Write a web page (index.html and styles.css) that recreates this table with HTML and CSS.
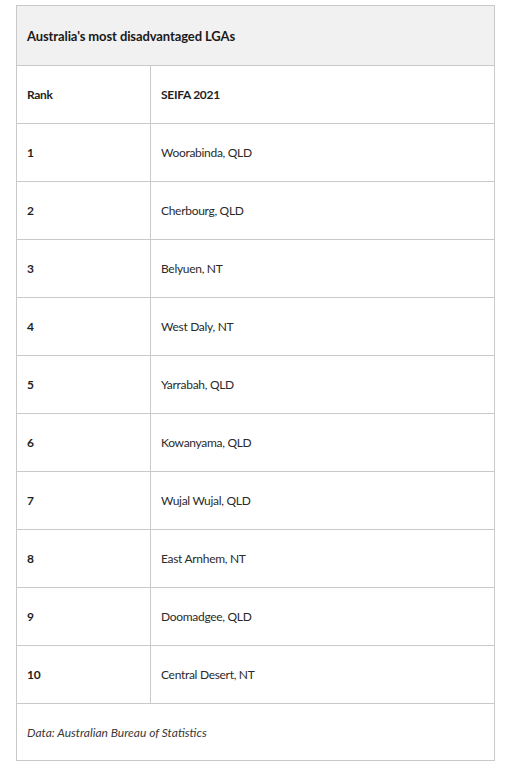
FILE: index.html
```html
<!DOCTYPE html>
<html lang="en">
<head>
<meta charset="utf-8">
<title>Australia's most disadvantaged LGAs</title>
<link rel="stylesheet" href="styles.css">
</head>
<body>
<table class="lga-table">
  <caption class="lga-caption">Australia's most disadvantaged LGAs</caption>
  <thead>
    <tr><th class="col-rank">Rank</th><th>SEIFA 2021</th></tr>
  </thead>
  <tbody>
    <tr><td class="col-rank">1</td><td>Woorabinda, QLD</td></tr>
    <tr><td class="col-rank">2</td><td>Cherbourg, QLD</td></tr>
    <tr><td class="col-rank">3</td><td>Belyuen, NT</td></tr>
    <tr><td class="col-rank">4</td><td>West Daly, NT</td></tr>
    <tr><td class="col-rank">5</td><td>Yarrabah, QLD</td></tr>
    <tr><td class="col-rank">6</td><td>Kowanyama, QLD</td></tr>
    <tr><td class="col-rank">7</td><td>Wujal Wujal, QLD</td></tr>
    <tr><td class="col-rank">8</td><td>East Arnhem, NT</td></tr>
    <tr><td class="col-rank">9</td><td>Doomadgee, QLD</td></tr>
    <tr><td class="col-rank">10</td><td>Central Desert, NT</td></tr>
  </tbody>
  <tfoot>
    <tr><td colspan="2" class="lga-source">Data: Australian Bureau of Statistics</td></tr>
  </tfoot>
</table>
</body>
</html>
```
FILE: styles.css
```css
html, body {
  margin: 0;
  padding: 0;
  background: #ffffff;
}
body {
  padding: 5px 16px 0 16px;
  font-family: Lato, "Liberation Sans", sans-serif;
  color: #1f1f1f;
}
.lga-table {
  width: 479px;
  border-collapse: collapse;
  border: 1px solid #c9c9c9;
  font-size: 12px;
}
.lga-caption {
  caption-side: top;
  text-align: left;
  background: #f1f1f1;
  border: 1px solid #c9c9c9;
  border-bottom: none;
  height: 60px;
  box-sizing: border-box;
  padding: 0 10px;
  line-height: 60px;
  font-size: 13px;
  font-weight: 700;
  letter-spacing: -0.1px;
  color: #1a1a1a;
}
.lga-table th,
.lga-table td {
  border: 1px solid #c9c9c9;
  height: 58px;
  box-sizing: border-box;
  padding: 0 10px;
  text-align: left;
  vertical-align: middle;
  font-weight: 400;
  letter-spacing: -0.3px;
  color: #2b2b2b;
}
.lga-table th {
  font-weight: 700;
  color: #1f1f1f;
}
.lga-table .col-rank {
  width: 134px;
  font-weight: 700;
  color: #1f1f1f;
}
.lga-table .lga-source {
  font-style: italic;
  letter-spacing: 0;
  color: #3a3a3a;
  height: 57px;
}
```
